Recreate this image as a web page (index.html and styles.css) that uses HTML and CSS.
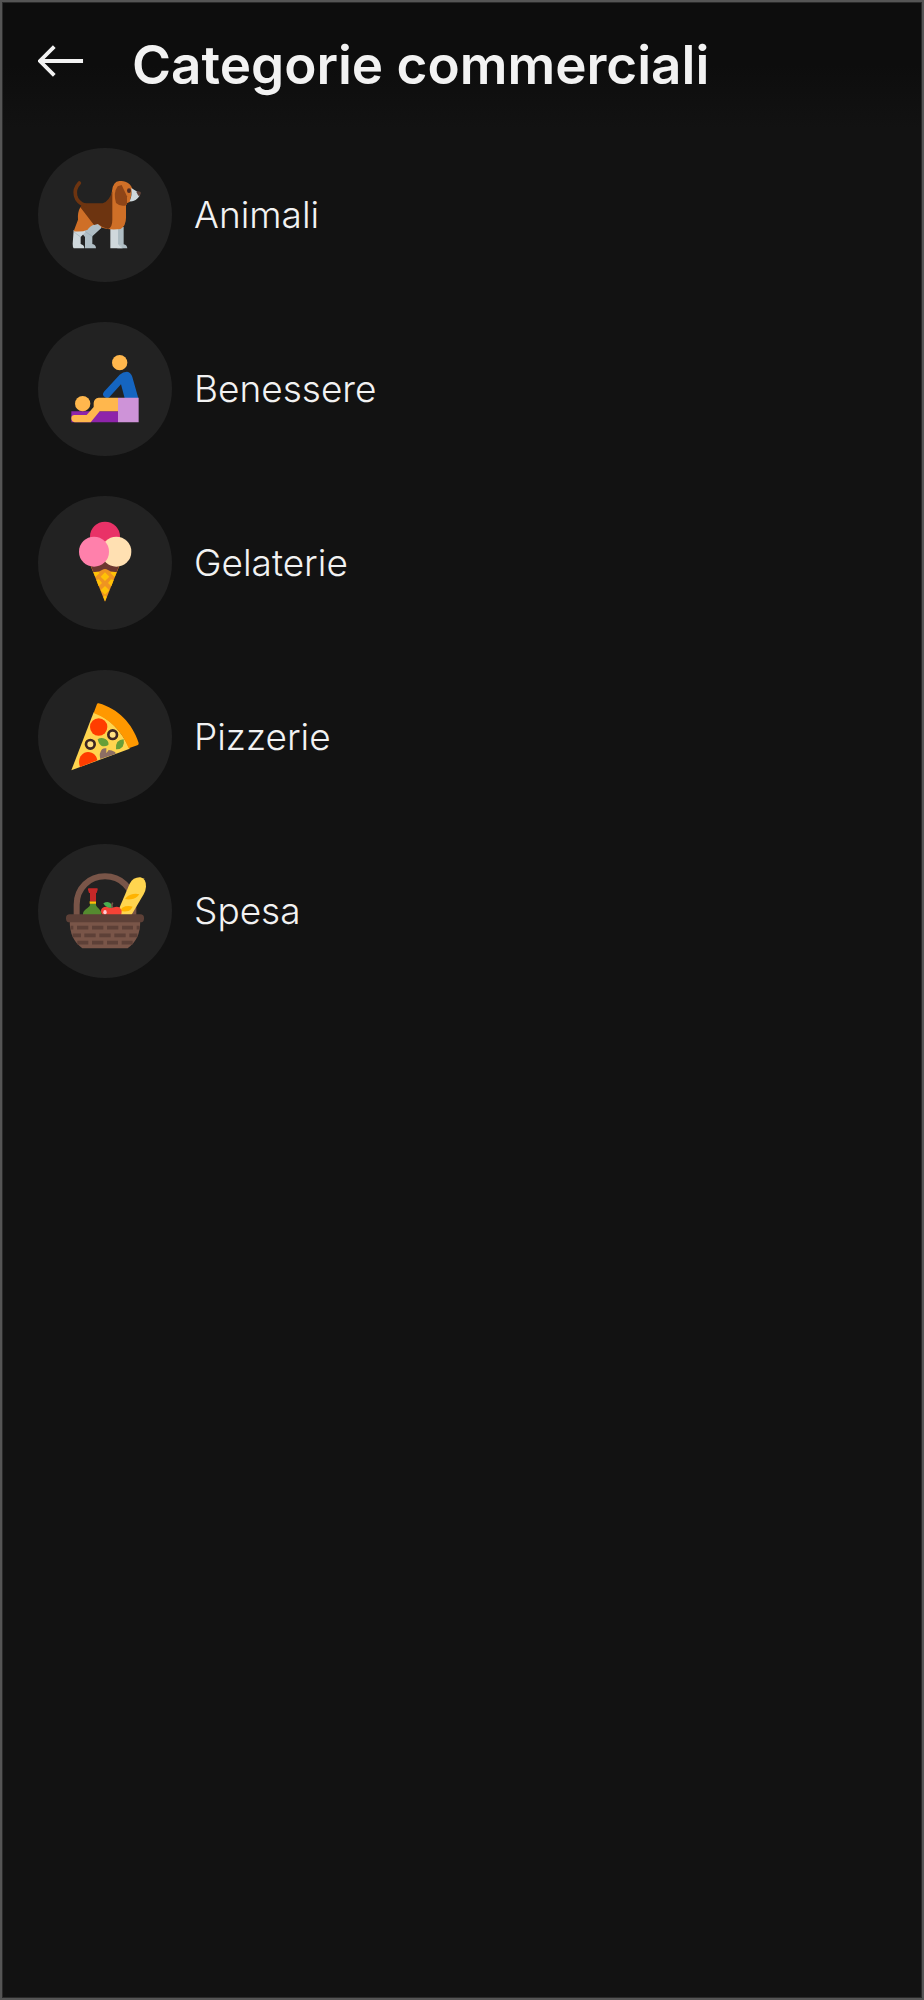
FILE: index.html
```html
<!DOCTYPE html>
<html lang="it">
<head>
<meta charset="utf-8">
<meta name="viewport" content="width=device-width, initial-scale=1">
<title>Categorie commerciali</title>
<link rel="stylesheet" href="styles.css">
</head>
<body>
<div class="screen">
  <header class="topbar">
    <button class="back" type="button" aria-label="Indietro">
      <svg class="back-icon" viewBox="0 0 48 32" aria-hidden="true"><path d="M17 1 2 16 17 31M2 16H47"/></svg>
    </button>
    <h1 class="title">Categorie commerciali</h1>
  </header>
  <main>
    <ul class="categories">
      <li>
        <a class="category" href="#animali">
          <svg class="category-icon" viewBox="24 23 402 402" aria-hidden="true">
            <path fill="#b0bec5" d="M165 265 188 250H214V263L187 288V311Q198 313 198 324H165V290L158 282Z"/>
            <path fill="#cfd8dc" d="M131 269H165L166 276 152 290V311Q163 314 163 324H131Q128 320 128 310Z"/>
            <path fill="#b0bec5" d="M262 260H281V312Q291 314 292 324H262Z"/>
            <path fill="#cfd8dc" d="M241 260H266V312Q277 315 277 324H241Z"/>
            <path fill="none" stroke="#90a4ae" stroke-width="1.5" d="M132 275 152 290M166 274 187 288M266 265V312L278 323"/>
            <path fill="#cf6f27" d="M151 201Q142 216 144 238L131 273Q156 276 173 268C180 258 191 250 204 251L216 262Q238 270 272 266Q288 256 288 232V190L300 184 307 145C300 126 285 122 268 122Q249 123 246 152L240 188Z"/>
            <path fill="#6d3410" d="M151 201 157 189H218Q237 184 247 153V238Q247 262 234 266Q218 263 204 251L192 254Z"/>
            <path fill="none" stroke="#6d3410" stroke-width="11" stroke-linecap="round" d="M148 128C127 151 133 184 165 195"/>
            <path fill="#cfd8dc" d="M304 143 323 155 329 166Q317 185 299 183 307 167 304 143Z"/>
            <path fill="#8f4517" d="M263 138 275 134 291 168V193Q274 202 258 188Q249 157 263 138Z"/>
            <ellipse cx="297" cy="151" rx="6" ry="7" fill="#4e2c24"/>
            <path fill="#5d4037" d="M319 155Q323 151 332 155 335 160 327 168 323 164 319 155Z"/>
          </svg>
          <span>Animali</span>
        </a>
      </li>
      <li>
        <a class="category" href="#benessere">
          <svg class="category-icon" viewBox="24 23 402 402" aria-hidden="true">
            <path fill="#8e24aa" d="M124 291H264V324H124Z"/>
            <path fill="#1565c0" d="M269 181Q279 172 291 172 303 174 307 188L325 252H284L273 210 239 247Q232 254 224 248 215 241 222 232Z"/>
            <path fill="#ffb74d" d="M206 250H264V291H209L182 324H134Q124 322 124 312T134 302H170L191 278V266Q192 252 206 250Z"/>
            <path fill="#ce93d8" d="M264 250H326V324H264Z"/>
            <circle cx="269" cy="145" r="23" fill="#ffb74d"/><circle cx="158" cy="268" r="23" fill="#ffb74d"/>
          </svg>
          <span>Benessere</span>
        </a>
      </li>
      <li>
        <a class="category" href="#gelaterie">
          <svg class="category-icon" viewBox="24 23 402 402" aria-hidden="true">
            <path fill="#ef9421" d="M182 233H268L225 340Z"/>
            <path fill="#ffc107" d="m225 252 13 13-13 13-13-13zM225 293l13 13-13 13-13-13zM190 252 204 249 209 254 196 266ZM260 252 246 249 241 254 254 266ZM199 275 207 273 216 284 206 294ZM251 275 243 273 234 284 244 294ZM220 326 225 321 230 326 225 339Z"/>
            <path fill="#6d3730" d="M182 231 190 251Q208 252 216 245 225 239 234 245 242 252 260 251L268 231 225 217Z"/>
            <circle cx="225" cy="145" r="45" fill="#e93267"/>
            <circle cx="259" cy="190" r="45" fill="#ffe0b2"/>
            <circle cx="192" cy="190" r="45" fill="#ff80ab"/>
          </svg>
          <span>Gelaterie</span>
        </a>
      </li>
      <li>
        <a class="category" href="#pizzerie">
          <svg class="category-icon" viewBox="24 23 402 402" aria-hidden="true">
            <path fill="#ffd54f" d="M124 324 191 150Q258 173 299 259Z"/>
            <path fill="#ff9800" d="M191 152 201 125Q202 122 206 123C264 139 307 183 326 242Q327 247 322 249L296 258Q266 181 191 152Z"/>
            <circle cx="206" cy="194" r="26" fill="#ff3d00"/>
            <path fill="#ff3d00" d="M150 314C141 290 155 269 174 269 190 269 200 280 202 294Z"/>
            <circle cx="248" cy="217" r="13" fill="#ffe082" stroke="#3e2723" stroke-width="8"/>
            <circle cx="181" cy="246" r="13" fill="#ffe082" stroke="#3e2723" stroke-width="8"/>
            <path fill="#689f38" d="M203 231Q213 224 226 230 238 238 235 248 224 254 214 250 206 245 203 231ZM281 231Q284 244 278 253 270 262 258 261 256 248 262 239 269 231 281 231Z"/>
            <path fill="#8d6e63" d="M211 290Q206 273 216 261 222 256 229 258V273L236 263Q245 263 255 269 258 272 256 275Z"/>
          </svg>
          <span>Pizzerie</span>
        </a>
      </li>
      <li>
        <a class="category" href="#spesa">
          <svg class="category-icon" viewBox="24 23 402 402" aria-hidden="true">
            <path fill="none" stroke="#795548" stroke-width="18" d="M140 240V205C140 155 178 120 225 120S310 155 310 205V240"/>
            <path fill="#ffd54f" d="M258 238 299 142Q310 122 331 123 349 127 348 151 347 163 341 174L303 238Z"/>
            <path fill="#ffb300" d="M285 188Q293 176 309 173 320 171 328 174 319 187 303 189 291 190 285 188ZM270 223Q275 213 286 210 299 208 308 211 302 223 290 225 279 226 270 223Z"/>
            <path fill="#558b2f" d="M180 201H198V207C202 216 213 219 215 234V240H159V232C161 219 175 217 180 207Z"/>
            <path fill="#ffc107" d="M179 195H198V202H179Z"/>
            <path fill="#c62828" d="M177 156H201Q204 156 203 160L200 170H198V195H180V170H177L174 160Q173 156 177 156Z"/>
            <path fill="#f44336" d="M222 240Q210 229 214 219 218 210 230 211L245 214 259 211Q273 211 275 225 276 234 270 240Z"/>
            <ellipse cx="225" cy="228" rx="5" ry="7" fill="#ffcdd2"/>
            <path fill="#4caf50" d="M220 201Q234 193 243 202 250 211 245 214 228 216 220 201Z"/>
            <path fill="none" stroke="#795548" stroke-width="5" d="M247 215Q243 207 248 199"/>
            <path fill="#795548" d="M119 254H331C330 295 319 316 293 336H157C131 316 120 295 119 254Z"/>
            <rect x="108" y="234" width="234" height="24" rx="11" fill="#5d4037"/>
            <path fill="none" stroke="#5d4037" stroke-width="11" d="M122 274H130M141 274H175M186 274H220M231 274H265M276 274H309M320 274H329M128 297H153M163 297H197M208 297H242M253 297H287M298 297H322M142 319H175M186 319H220M231 319H264M275 319H308"/>
          </svg>
          <span>Spesa</span>
        </a>
      </li>
    </ul>
  </main>
</div>
</body>
</html>
```
FILE: styles.css
```css
* {
  box-sizing: border-box;
}

body {
  margin: 0;
  background: #121212;
  color: #f2f2f2;
  font-family: Inter, "Liberation Sans", sans-serif;
}

.screen {
  min-height: 100vh;
  border: 2px solid #555;
  background: #121212;
  box-shadow: inset 0 0 0 1px #2a2a2a;
}

.topbar {
  display: flex;
  align-items: center;
  gap: 48px;
  height: 126px;
  padding: 0 36px;
  background: linear-gradient(#0d0d0d 50%, #121212);
  box-shadow: inset 0 1px #2a2a2a, inset 1px 0 #2a2a2a, inset -1px 0 #2a2a2a;
}

.back {
  display: flex;
  padding: 0 0 8px;
  border: 0;
  background: none;
  color: inherit;
  cursor: pointer;
}

.back-icon {
  width: 46px;
  height: 32px;
  fill: none;
  stroke: currentColor;
  stroke-width: 4;
}

.title {
  margin: 0;
  font-size: 53px;
  font-weight: 600;
  line-height: 64px;
}

.categories {
  display: grid;
  gap: 40px;
  margin: 0;
  padding: 20px 36px;
  list-style: none;
}

.category {
  display: flex;
  align-items: center;
  gap: 22px;
  color: inherit;
  font-size: 37px;
  font-weight: 300;
  line-height: 44px;
  text-decoration: none;
}

.category-icon {
  flex: none;
  width: 134px;
  height: 134px;
  border-radius: 50%;
  background: #222;
}
```
